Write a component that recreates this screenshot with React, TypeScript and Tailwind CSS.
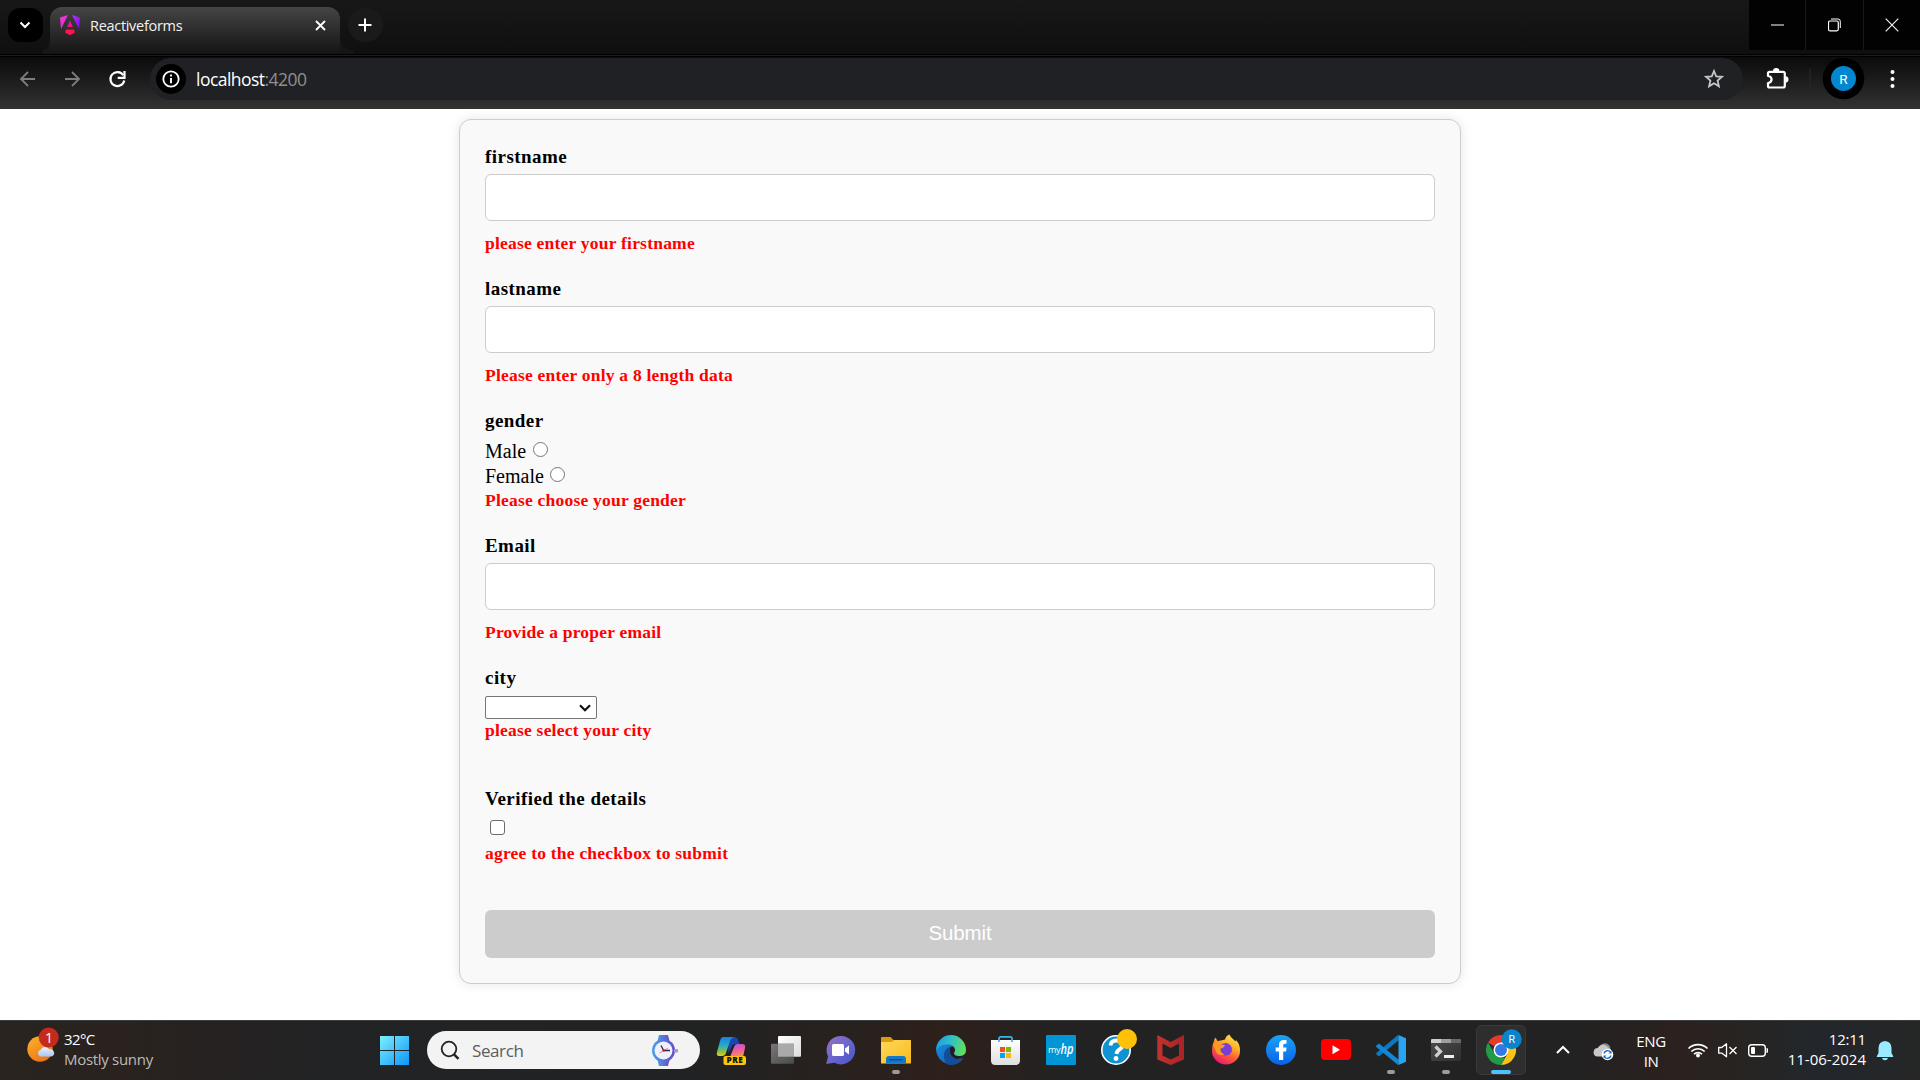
import React from "react";

type ArtProps = { x: number; y: number; w: number; h: number; children: React.ReactNode };

function Art({ x, y, w, h, children }: ArtProps) {
  return (
    <svg className="block shrink-0" width={w} height={h} viewBox={`${x} ${y} ${w} ${h}`} fill="none">
      {children}
    </svg>
  );
}

function IconSlot({ children }: { children: React.ReactNode }) {
  return <Art x={0} y={0} w={55} h={60}>{children}</Art>;
}

function TitleBar() {
  return (
    <div className="flex h-[54px] bg-linear-to-b from-[#181818] to-[#0f0f0f]">
      <div className="mt-2 ml-2 flex h-[34px] w-[35px] items-center justify-center rounded-xl bg-black">
        <svg className="mr-px" width="12" height="8" viewBox="0 0 12 8" fill="none"><path d="M1.500 1.500 6 6l4.500-4.500" stroke="#fff" strokeWidth="2" /></svg>
      </div>
      <div className="flex h-full w-[7px] items-end"><svg width="7" height="54" viewBox="0 0 7 54"><path d="M7 38V54H0V50Q6 48 7 38Z" fill="#171717" /></svg></div>
      <div className="mt-[7px] flex h-[47px] w-[290px] items-start rounded-t-[12px] bg-linear-to-b from-[#454545] to-[#151515] pt-[7px] pl-[10px]">
        <svg width="20" height="22" viewBox="0 0 20 22">
          <defs>
            <linearGradient id="ngL" x1="0" y1="0" x2="1" y2="1"><stop stopColor="#f33bd8" /><stop offset="1" stopColor="#e020d0" /></linearGradient>
            <linearGradient id="ngR" x1="0" y1="0" x2="1" y2="1"><stop stopColor="#c030f0" /><stop offset="1" stopColor="#6a10f5" /></linearGradient>
            <linearGradient id="ngC" x1="0" y1="0" x2="0" y2="1"><stop stopColor="#d81ac0" /><stop offset="1" stopColor="#ff1070" /></linearGradient>
          </defs>
          <path d="M8 1 0 3.500 1 15Z" fill="url(#ngL)" />
          <path d="M12 1 20 3.500 19 15Z" fill="url(#ngR)" />
          <path d="M10 6.500 12.800 13H7.200Z" fill="url(#ngC)" />
          <path d="M6 15.500H14L15 18.500 10 21.300 5 18.500Z" fill="#ff1350" />
        </svg>
        <span className="mt-px ml-[10px] w-[224px] font-['Open_Sans'] text-[14.5px] leading-[22px] tracking-[-0.3px] text-[#f2f2f2]">Reactiveforms</span>
        <svg className="mt-[6px] ml-[0.5px]" width="11" height="11" viewBox="0 0 11 11"><path d="M1 1 10 10M10 1 1 10" stroke="#fff" strokeWidth="1.800" /></svg>
      </div>
      <svg width="14" height="54" viewBox="0 0 14 54"><path d="M0 38V54H14V50Q1 49 0 38Z" fill="#151515" /></svg>
      <div className="mt-2 -ml-[6px] flex h-[34px] w-[35px] items-center justify-center rounded-full bg-[#1a1a1a]">
        <svg className="mr-px" width="14" height="14" viewBox="0 0 14 14"><path d="M7 .5v13M.5 7h13" stroke="#fff" strokeWidth="2" /></svg>
      </div>
      <div className="ml-auto flex h-[50px] gap-px bg-[#171717]">
        <div className="flex w-14 items-center justify-center bg-[#020202]"><svg width="13" height="13" viewBox="0 0 13 13"><path d="M0 6h13" stroke="#fff" /></svg></div>
        <div className="flex w-[57px] items-center justify-center bg-[#020202] pr-px">
          <svg width="13" height="14" viewBox="0 0 13 14" fill="none"><rect x=".5" y="3" width="9.800" height="9.800" rx="1.500" stroke="#fff" strokeWidth="1.200" /><path d="M3 1h7a2.300 2.300 0 0 1 2.300 2.300V10" stroke="#fff" /></svg>
        </div>
        <div className="flex w-14 items-center justify-center bg-[#020202] pr-px"><svg width="14" height="14" viewBox="0 0 14 14"><path d="M.7.7 13.300 13.300M13.300.7.7 13.300" stroke="#eee" strokeWidth="1.200" /></svg></div>
      </div>
    </div>
  );
}

function Toolbar() {
  return (
    <div className="flex h-[52px] bg-linear-to-b from-[#0b0b0b] to-[#333]">
      <Art x={0} y={57} w={150} h={52}>
        <path d="M35 79H21.500M28 72 21 79l7 7" stroke="#7d7d7d" strokeWidth="1.800" />
        <path d="M65 79h13.500M72 72l7 7-7 7" stroke="#7d7d7d" strokeWidth="1.800" />
        <path d="M123.300 75.200A7 7 0 1 0 124.300 80.500" stroke="#fff" strokeWidth="2.200" />
        <path d="M124.500 71v6.800h-6.800" stroke="#fff" strokeWidth="2.200" />
      </Art>
      <div className="mt-px flex h-[42px] w-[1593px] items-center rounded-full bg-[#202124] pl-[6px]">
        <div className="flex size-[30px] items-center justify-center rounded-full bg-black">
          <svg width="18" height="18" viewBox="0 0 18 18" fill="none"><circle cx="9" cy="9" r="7.700" stroke="#fff" strokeWidth="1.800" /><path d="M9 8v5.200M9 4.600v2" stroke="#fff" strokeWidth="1.900" /></svg>
        </div>
        <span className="ml-[10px] font-['Open_Sans'] text-[17.5px] leading-[26px] tracking-[-0.53px] text-white">localhost<span className="text-[#8f9093]">:4200</span></span>
        <svg className="mr-[18px] ml-auto" width="22" height="22" viewBox="0 0 22 22" fill="none"><path d="m11 3 2.200 5.300 5.800.5-4.400 3.800 1.300 5.700-4.900-3-4.900 3 1.300-5.700L3 8.800l5.800-.5Z" stroke="#c7c7c7" strokeWidth="1.800" /></svg>
      </div>
      <Art x={1743} y={57} w={177} h={52}>
        <path d="M1769.500 71.800H1783q1.800 0 1.800 1.800V85.700q0 1.800-1.800 1.800H1769.500q-1.500 0-1.500-1.500V83.200q3.600-1 3.600-3.700t-3.600-3.700V73.300q0-1.500 1.500-1.500Z" stroke="#fff" strokeWidth="2.200" />
        <path d="M1773 71.200a3.200 3.200 0 0 1 6.400 0ZM1785.400 76.300a3.100 3.100 0 0 1 0 6.200Z" fill="#fff" />
        <path d="M1810 69v20" stroke="#242424" strokeWidth="1.500" />
        <circle cx="1843.500" cy="78.500" r="20.800" fill="#000" />
        <circle cx="1843.500" cy="78.500" r="12.500" fill="#0288d1" />
        <text x="1843.500" y="83.500" textAnchor="middle" fontFamily="Roboto" fontSize="13.500" fill="#fff">R</text>
        <circle cx="1892.500" cy="72" r="2" fill="#fff" /><circle cx="1892.500" cy="79" r="2" fill="#fff" /><circle cx="1892.500" cy="86" r="2" fill="#fff" />
      </Art>
    </div>
  );
}

function Label({ children }: { children: React.ReactNode }) {
  return <div className="h-6 text-[19px] leading-6 font-bold tracking-[0.45px] text-black">{children}</div>;
}

function ErrorText({ children }: { children: React.ReactNode }) {
  return <div className="h-5 text-[17.5px] leading-5 font-bold tracking-[0.22px] text-[#ff0000]">{children}</div>;
}

function TextField({ label, error }: { label: string; error: string }) {
  return (
    <div className="mb-6">
      <Label>{label}</Label>
      <input className="mt-[5px] mb-3 block h-[47px] w-full rounded-[6px] border border-[#ccc] bg-white px-3" />
      <ErrorText>{error}</ErrorText>
    </div>
  );
}

function RadioRow({ text }: { text: string }) {
  return (
    <div className="flex h-[25px] items-start text-[20px] leading-[25px] text-black">
      <span>{text}</span>
      <span className="mt-[3px] ml-[6.5px] size-[15px] rounded-full border border-[#767676] bg-white" />
    </div>
  );
}

function Form() {
  return (
    <div className="mx-auto mt-[10px] h-[865px] w-[1002px] rounded-[12px] border border-[#ccc] bg-[#f9f9f9] p-[25px] font-['Liberation_Serif',serif] shadow-[0_0_12px_rgba(0,0,0,0.1)]">
      <TextField label="firstname" error="please enter your firstname" />
      <TextField label="lastname" error="Please enter only a 8 length data" />
      <div className="mb-6">
        <Label>gender</Label>
        <div className="mt-[6px] mb-px"><RadioRow text="Male" /><RadioRow text="Female" /></div>
        <ErrorText>Please choose your gender</ErrorText>
      </div>
      <TextField label="Email" error="Provide a proper email" />
      <div className="mb-[47px]">
        <Label>city</Label>
        <div className="mt-[6px] mb-px flex h-[23px] w-28 items-center justify-end rounded-[2px] border border-[#767676] bg-white pr-[5px]">
          <svg width="12" height="8" viewBox="0 0 12 8" fill="none"><path d="m1 1.300 5 5 5-5" stroke="#111" strokeWidth="2.200" /></svg>
        </div>
        <ErrorText>please select your city</ErrorText>
      </div>
      <div className="mb-[47px]">
        <Label>Verified the details</Label>
        <div className="mt-[9px] mb-2 ml-[5px] size-[15px] rounded-[3px] border border-[#6b6b6b] bg-white" />
        <ErrorText>agree to the checkbox to submit</ErrorText>
      </div>
      <button className="flex h-12 w-full items-center justify-center rounded-[6px] bg-[#ccc] pb-[3px] font-['Liberation_Sans'] text-[20.5px] leading-6 tracking-[-0.15px] text-white">Submit</button>
    </div>
  );
}

function TaskIcons() {
  return (
    <div className="flex">
      <IconSlot>
        <defs>
          <linearGradient id="cpA" x1="0" y1="0" x2="0" y2="1"><stop stopColor="#1a7fe0" /><stop offset=".45" stopColor="#2aa9c8" /><stop offset=".75" stopColor="#7cc04a" /><stop offset="1" stopColor="#f2c812" /></linearGradient>
          <linearGradient id="cpB" x1="0" y1="0" x2=".3" y2="1"><stop stopColor="#a855e8" /><stop offset=".5" stopColor="#e85aa8" /><stop offset="1" stopColor="#f98a5a" /></linearGradient>
        </defs>
        <path d="M25 17h6q3 0 4 3l1.500 4h-4q-3 0-4 3l-3 6Z" fill="#1747b5" />
        <path d="M20 17h11q-3 1-4 4l-4 12q-1 3-4 3h-3q-3 0-2-4l3-11q1-4 3-4Z" fill="url(#cpA)" />
        <path d="M34 24h5q4 0 3 4l-2 9H27l4-10q1-3 3-3Z" fill="url(#cpB)" />
        <rect x="20.500" y="36" width="22.500" height="9" rx="2" fill="#ffc40c" />
        <text x="31.900" y="43.400" textAnchor="middle" fontFamily="Open Sans" fontWeight="800" fontSize="8.200" letterSpacing=".5" fill="#111">PRE</text>
      </IconSlot>
      <IconSlot>
        <defs>
          <linearGradient id="tvA" x1="0" y1="0" x2="1" y2="1"><stop stopColor="#fff" /><stop offset="1" stopColor="#dcdcdc" /></linearGradient>
          <linearGradient id="tvB" x1="0" y1="0" x2="1" y2="1"><stop stopColor="#777" /><stop offset="1" stopColor="#4a4a4a" /></linearGradient>
        </defs>
        <rect x="20" y="16" width="23" height="20.700" rx="1" fill="url(#tvA)" />
        <rect x="13" y="23.700" width="23" height="20" rx="1" fill="url(#tvB)" />
        <path d="M20 23.700h16v13H20Z" fill="#a9a9a9" />
      </IconSlot>
      <IconSlot>
        <defs><linearGradient id="chA" x1="0" y1="0" x2="1" y2="1"><stop stopColor="#9a72c4" /><stop offset=".5" stopColor="#6a66cc" /><stop offset="1" stopColor="#4a52c8" /></linearGradient></defs>
        <path d="M27.500 16a14.200 14.200 0 1 1-6 26.800L13.200 44l1.800-7.500A14.200 14.200 0 0 1 27.500 16Z" fill="url(#chA)" />
        <rect x="19" y="24" width="12" height="12" rx="1.500" fill="#fff" /><path d="M32 28.500 36 25.500v9L32 31.500Z" fill="#fff" />
      </IconSlot>
      <IconSlot>
        <defs><linearGradient id="exA" x1="0" y1="0" x2="1" y2="1"><stop stopColor="#ffd95a" /><stop offset="1" stopColor="#f8b91e" /></linearGradient></defs>
        <path d="M14 17h8.500l3 3H42q1 0 1 1v5H13v-8q0-1 1-1Z" fill="#dd9b0b" />
        <path d="M13 22h10.500l3-2H42q1 0 1 1v22q0 .5-.5.5h-29q-.5 0-.5-.5Z" fill="url(#exA)" />
        <path d="M18 43.500V39q0-3 3-3h14q3 0 3 3v4.500Z" fill="#1279c9" /><path d="M21 39.700h13.500" stroke="#0a4c8f" strokeWidth="1.400" />
        <rect x="24" y="50" width="8" height="4" rx="2" fill="#9b9b9b" />
      </IconSlot>
      <IconSlot>
        <defs>
          <linearGradient id="edA" x1="0" y1=".3" x2="1" y2=".5"><stop stopColor="#1e9de0" /><stop offset=".5" stopColor="#2fc2c4" /><stop offset="1" stopColor="#63e05a" /></linearGradient>
          <linearGradient id="edB" x1="0" y1="0" x2="1" y2="1"><stop stopColor="#1b8be0" /><stop offset="1" stopColor="#1060b8" /></linearGradient>
        </defs>
        <path d="M13 30A15 15 0 0 1 34 20L29 27q-2 7 4 10.500 4 2 7 .5A15 15 0 0 1 13 30Z" fill="url(#edB)" />
        <path d="M40.500 38.500A15 15 0 0 1 25 44.700q-5-4-4-11 1-5 6-7l2 1q-2 4 1 8 4 4 10.500 2.800Z" fill="#124f98" />
        <path d="M27 29q0-1.500 1.300-2.500 3.700 0 2.700 5-1 3 3 4l3 1-1.500 2.500q-4 0-5.500-2-3.500-3-3-8Z" fill="#221e1d" />
        <path d="M13 30A15 15 0 0 1 43 30q0 6-7 6-5 0-5-3 1.500-2 1-4-2-5-8-4.500Q17 24.500 13 30Z" fill="url(#edA)" />
      </IconSlot>
      <IconSlot>
        <defs><linearGradient id="stA" x1="0" y1="0" x2="0" y2="1"><stop stopColor="#fff" /><stop offset="1" stopColor="#dedede" /></linearGradient></defs>
        <path d="M13 20h29v20.500q0 4.500-4.500 4.500h-20q-4.500 0-4.500-4.500Z" fill="url(#stA)" />
        <path d="M21 22v-3.500q0-1.700 1.700-1.700h9.600q1.700 0 1.700 1.700V22" stroke="#35b6ee" strokeWidth="1.700" />
        <path d="M22 27h5v5h-5Z" fill="#f25022" /><path d="M28 27h5v5h-5Z" fill="#7fba00" /><path d="M22 33h5v5h-5Z" fill="#00a4ef" /><path d="M28 33h5v5h-5Z" fill="#ffb900" />
      </IconSlot>
      <IconSlot>
        <rect x="13" y="15" width="30" height="30" rx="1" fill="#0096d6" />
        <text x="15" y="33" fontFamily="Open Sans" fontSize="9" letterSpacing="-.4" fill="#fff">my</text>
        <text x="27.500" y="34" fontFamily="Open Sans" fontSize="14" fontStyle="italic" fontWeight="600" textLength="13" lengthAdjust="spacingAndGlyphs" fill="#fff">hp</text>
      </IconSlot>
      <IconSlot>
        <circle cx="28" cy="30" r="14.200" fill="#0f93d2" stroke="#fff" strokeWidth="1.600" />
        <path d="M22.500 25.500q.5-5 6-5 6 0 6 4.500 0 2.500-3 4.300-2.800 1.700-3 4.700" stroke="#fff" strokeWidth="3.800" /><circle cx="28" cy="38.500" r="2.400" fill="#fff" />
        <circle cx="39" cy="19" r="10" fill="#ffc107" />
      </IconSlot>
      <IconSlot>
        <defs><linearGradient id="mcA" x1="0" y1="0" x2="1" y2="0"><stop stopColor="#c23230" /><stop offset="1" stopColor="#a82426" /></linearGradient></defs>
        <path d="M14.300 15 27.700 22 41 15V39.500L27.700 45 14.300 39.500ZM19.500 23.500V35.500L27.700 39.500 36 35.500V23.500L27.700 28Z" fillRule="evenodd" fill="url(#mcA)" />
      </IconSlot>
      <IconSlot>
        <defs>
          <linearGradient id="ffA" x1=".8" y1="0" x2=".3" y2="1"><stop stopColor="#ffe84a" /><stop offset=".35" stopColor="#ffb02a" /><stop offset=".65" stopColor="#ff5a35" /><stop offset="1" stopColor="#e8167a" /></linearGradient>
        </defs>
        <path d="M16 21q0-2 1.500-3.500L19.500 21l3.500-.5q2-.5 4-1 1-4 4.500-5 1 3 4 5l2 2 .5-1.500q4.500 5 4 11a14 13.500 0 0 1-28 0Q14 25 16 21Z" fill="url(#ffA)" />
        <path d="M22 26q4-5 9-2 4 3 2.500 8-2.500 4.500-8 3.300-4.500-2-3.500-9.300Z" fill="#7a3fd0" />
        <path d="M15 24q5-3 7 .5l5 .5q-1 3-4.500 3.500-.5 4.500 4 6-7 2-9-4Z" fill="#ff9a1f" />
      </IconSlot>
      <IconSlot>
        <defs><linearGradient id="fbA" x1="0" y1="0" x2="0" y2="1"><stop stopColor="#19a3f7" /><stop offset="1" stopColor="#0a62e8" /></linearGradient></defs>
        <circle cx="28" cy="30" r="15" fill="url(#fbA)" />
        <path d="M26 40V31.500h-3.300v-4H26V25q0-5 5-5h2.500v3.700h-1.700q-1.600 0-1.600 1.700v2.100h3.400l-.6 4h-2.800V40Z" fill="#fff" />
      </IconSlot>
      <IconSlot>
        <rect x="13" y="19" width="30" height="21" rx="4" fill="#f00" /><path d="M24.500 25.200v9L32 29.700Z" fill="#fff" />
      </IconSlot>
      <IconSlot>
        <path d="M36 20 16 36.500 13.300 34.500q-.5-.8 0-1.500L35 15Z" fill="#0b78c2" />
        <path d="M36 40 16 23.500 13.300 25.500q-.5.800 0 1.500L35 45Z" fill="#1487d4" />
        <path d="M35.500 15 43 18.300V41.700L35.500 45Z" fill="#2aa3f0" />
        <rect x="24" y="50" width="8" height="4" rx="2" fill="#9b9b9b" />
      </IconSlot>
      <IconSlot>
        <defs><linearGradient id="teA" x1="0" y1="0" x2="1" y2="1"><stop stopColor="#4c4c4c" /><stop offset="1" stopColor="#303030" /></linearGradient></defs>
        <rect x="13" y="19" width="30" height="22" rx="1.500" fill="url(#teA)" />
        <path d="M13 23v-3q0-1 1-1h9v4Z" fill="#d0d0d0" /><path d="M23 19h10v4H23Z" fill="#a0a0a0" /><path d="M33 19h9q1 0 1 1v3H33Z" fill="#6a6a6a" />
        <path d="m17.500 26.500 5 5-5 5" stroke="#cfcfcf" strokeWidth="3.200" /><path d="M26 36.500h10" stroke="#eee" strokeWidth="3" />
        <rect x="24" y="50" width="8" height="4" rx="2" fill="#9b9b9b" />
      </IconSlot>
      <IconSlot>
        <rect x="3.500" y="5.500" width="49" height="49" rx="5" fill="#2e2e2e" stroke="#3a3a3a" />
        <path d="M28 30 15 22.500A15 15 0 0 1 41 22.500Z" fill="#e33b2e" /><path d="M28 22.500H41A15 15 0 0 1 28 45L34.500 33.700Z" fill="#fbc116" /><path d="M28 45A15 15 0 0 1 15 22.500L21.500 33.700 28 37.500 32 38Z" fill="#229a48" />
        <circle cx="28" cy="30" r="7.500" fill="#fff" /><circle cx="28" cy="30" r="6" fill="#3478e8" />
        <circle cx="38.700" cy="19.300" r="10" fill="#0a84cc" />
        <text x="38.700" y="23" textAnchor="middle" fontFamily="Roboto" fontSize="10.500" fill="#fff">R</text>
        <rect x="18" y="50" width="20" height="4" rx="2" fill="#4cc2ff" />
      </IconSlot>
    </div>
  );
}

function Taskbar() {
  return (
    <div className="flex h-[60px] bg-[linear-gradient(90deg,#292420_0%,#29221f_7%,#212325_18%,#212223_36%,#2a211d_46%,#2e201a_49%,#222223_56%,#222222_82%,#2b211e_87%,#272422_91%,#22272c_95%,#262626_100%)] font-['Open_Sans'] text-[15px] leading-5 text-white shadow-[inset_0_1px_0_#3b3d3d]">
      <Art x={0} y={1020} w={64} h={60}>
        <defs>
          <linearGradient id="sun" x1="0" y1="0" x2=".6" y2="1"><stop stopColor="#f8b62c" /><stop offset="1" stopColor="#ee7418" /></linearGradient>
          <linearGradient id="cld" x1="0" y1="0" x2="0" y2="1"><stop stopColor="#eaf2fd" /><stop offset="1" stopColor="#a9c6f2" /></linearGradient>
        </defs>
        <circle cx="40" cy="1049" r="12.700" fill="url(#sun)" />
        <path d="M40 1056.500a3.500 3.500 0 0 1 .5-6.500 5 5 0 0 1 9-.5 3.600 3.600 0 0 1 2 7Z" fill="url(#cld)" />
        <circle cx="48.700" cy="1037.500" r="10" fill="#c42b1c" />
        <text x="49" y="1042.500" textAnchor="middle" fontFamily="Open Sans" fontSize="14" fill="#fff">1</text>
      </Art>
      <div className="w-[310px] pt-[9px]">
        <div className="tracking-[-0.6px]">32°C</div>
        <div className="tracking-[-0.3px] text-[#bdbbb9]">Mostly sunny</div>
      </div>
      <Art x={374} y={1020} w={53} h={60}>
        <defs><linearGradient id="win" gradientUnits="userSpaceOnUse" x1="380" y1="1036" x2="409" y2="1065"><stop stopColor="#7cf0ff" /><stop offset="1" stopColor="#0d96f8" /></linearGradient></defs>
        <path d="M380 1036h14v14h-14ZM395 1036h14v14h-14ZM380 1051h14v14h-14ZM395 1051h14v14h-14Z" fill="url(#win)" />
      </Art>
      <div className="mt-[11px] flex h-[38px] w-[273px] items-center rounded-full bg-[#f3f3f3] text-[#5c5c5c]">
        <Art x={427} y={1031} w={45} h={38}>
          <circle cx="449" cy="1049" r="7.300" stroke="#222" strokeWidth="1.800" /><path d="m454 1054.300 4.500 4.500" stroke="#222" strokeWidth="2.400" />
        </Art>
        <span className="pt-[2px] text-[17px] tracking-[-0.4px]">Search</span>
        <div className="ml-auto">
          <Art x={645} y={1031} w={55} h={38}>
            <defs><linearGradient id="wat" x1="0" y1="0" x2="1" y2="0"><stop stopColor="#4aa0e6" /><stop offset="1" stopColor="#6a4bc4" /></linearGradient></defs>
            <path d="M659 1035h9l2 8h-13ZM657 1058h13l-2 8h-9Z" fill="url(#wat)" />
            <circle cx="663.500" cy="1050.500" r="11.500" fill="url(#wat)" /><rect x="674" y="1049" width="4" height="3.500" rx="1" fill="#8fa0dc" />
            <circle cx="663.500" cy="1050.500" r="9" fill="#eef0fb" /><path d="M661 1045.500 663.700 1050.500H670" stroke="#222a55" strokeWidth="1.300" /><path d="m659.500 1053 8.500-5" stroke="#e06060" strokeWidth=".7" /><circle cx="663.700" cy="1050.500" r="1.300" fill="#c62828" />
          </Art>
        </div>
      </div>
      <div className="ml-[3px]"><TaskIcons /></div>
      <Art x={1528} y={1020} w={98} h={60}>
        <path d="m1557 1053 6-6 6 6" stroke="#fff" strokeWidth="2" />
        <path d="M1599 1050a6 6 0 0 1 10-5q1.500 1.500 1.500 5l-2 2Z" fill="#8a8a8a" />
        <path d="M1597 1056.500a4.300 4.300 0 0 1 .7-8.500 6 6 0 0 1 10.500-.5q3.500 1.500 3 5l-3 4Z" fill="#c8c8c8" />
        <circle cx="1607.500" cy="1054.500" r="5.800" fill="#fff" /><path d="M1604 1053.500a3.700 3.700 0 0 1 6.800-1M1611 1055.500a3.700 3.700 0 0 1-6.800 1" stroke="#1a6fc4" strokeWidth="1.400" /><path d="M1611.500 1050.500v3h-3ZM1603.500 1058.500v-3h3Z" fill="#1a6fc4" />
      </Art>
      <div className="w-[50px] pt-[10.5px] text-center text-[15px] tracking-[-0.4px]"><div>ENG</div><div>IN</div></div>
      <Art x={1676} y={1020} w={94} h={60}>
        <path d="M1688.500 1048.500a13.500 13.500 0 0 1 19 0M1691.300 1051.500a9.500 9.500 0 0 1 13.400 0M1694 1054.300a5.700 5.700 0 0 1 8 0" stroke="#fff" strokeWidth="1.600" /><circle cx="1698" cy="1055.500" r="2" fill="#fff" />
        <path d="M1718.700 1047.500h3l4.800-3.700v13l-4.800-3.700h-3Z" stroke="#fff" strokeWidth="1.300" strokeLinejoin="round" /><path d="m1729.500 1047 7 7M1736.500 1047l-7 7" stroke="#fff" strokeWidth="1.300" />
        <rect x="1748.700" y="1044.700" width="16.600" height="11.600" rx="3" stroke="#fff" strokeWidth="1.400" /><rect x="1751" y="1047" width="4" height="7" rx="1" fill="#fff" /><path d="M1766.500 1048q1.500 0 1.500 1.300v2.400q0 1.300-1.500 1.300Z" fill="#fff" />
      </Art>
      <div className="w-[96px] pt-[9px] text-right"><div className="tracking-[-0.2px]">12:11</div><div>11-06-2024</div></div>
      <Art x={1866} y={1020} w={54} h={60}>
        <path d="M1885 1041q6.300.5 6.500 7v5l1.700 3.300v.7h-16.400v-.7l1.700-3.300v-5q.2-6.500 6.500-7ZM1882 1058h6q-.5 2.300-3 2.300t-3-2.300Z" fill="#99ebff" />
      </Art>
    </div>
  );
}

export default function App() {
  return (
    <div className="flex h-[1080px] w-[1920px] flex-col overflow-hidden bg-white">
      <TitleBar />
      <div className="h-[3px] border-y border-black bg-[#1c1c1c]" />
      <Toolbar />
      <main className="h-[911px]"><Form /></main>
      <Taskbar />
    </div>
  );
}
